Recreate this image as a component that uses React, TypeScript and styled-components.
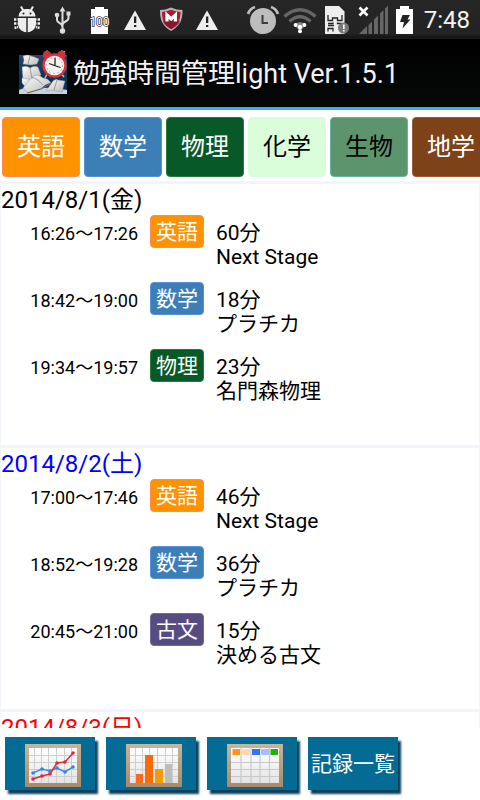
import React from "react";
import styled, { createGlobalStyle } from "styled-components";

const GlobalStyle = createGlobalStyle`
  *, *::before, *::after { box-sizing: border-box; }
  body {
    margin: 0;
    background: #ffffff;
    color: #000000;
    font-family: Roboto, "Noto Sans CJK JP", sans-serif;
  }
  button { font-family: inherit; }
`;

const Screen = styled.div`
  display: flex;
  flex-direction: column;
  height: 100vh;
  overflow: hidden;
`;

const StatusBar = styled.div`
  display: flex;
  flex: none;
  align-items: center;
  justify-content: space-between;
  height: 39px;
  padding: 0 10px 0 9px;
  background: linear-gradient(#262626 0, #232323 34px, #151515 37px, #1c1c1c 39px);
`;

const StatusGroup = styled.div<{ $gap?: number }>`
  display: flex;
  align-items: center;
  gap: ${(p) => p.$gap ?? 0}px;
`;

const StatusIcon = styled.svg<{ $width?: number }>`
  display: block;
  width: ${(p) => p.$width ?? 36}px;
  height: 38px;
`;

const Clock = styled.time`
  padding-left: 6px;
  color: #f4f4f4;
  font-size: 24px;
  line-height: 38px;
`;

const TitleBar = styled.header`
  display: flex;
  flex: none;
  align-items: center;
  gap: 5px;
  height: 71px;
  padding: 0 18px;
  background: linear-gradient(#000000, #060808);
  border-bottom: 3px solid #33b1e4;
`;

const AppIcon = styled.svg`
  flex: none;
  width: 50px;
  height: 48px;
`;

const Title = styled.h1`
  margin: 0;
  padding-top: 2px;
  color: #f3f3f3;
  font-size: 27px;
  font-weight: 400;
  line-height: 36px;
  white-space: nowrap;
`;

const SubjectBar = styled.nav`
  display: flex;
  flex: none;
  gap: 4px;
  padding: 7px 2px 4px;
  overflow-x: auto;
  scrollbar-width: none;
`;

type Tone = { fill: string; edge: string; text: string };

const SubjectButton = styled.button<{ $tone: Tone }>`
  flex: none;
  width: 78px;
  height: 60px;
  padding: 0;
  border: 1px solid ${(p) => p.$tone.edge};
  border-radius: 4px;
  background: ${(p) => p.$tone.fill};
  color: ${(p) => p.$tone.text};
  font-size: 24px;
  line-height: 36px;
`;

const DayList = styled.main`
  flex: 1;
  min-height: 0;
  overflow-y: auto;
  scrollbar-width: none;
`;

const Day = styled.section`
  padding-bottom: 29px;
  border: solid #f0f6fa;
  border-width: 3px 1px 0;
`;

const DayTitle = styled.h2<{ $color: string }>`
  margin: 0;
  height: 31px;
  color: ${(p) => p.$color};
  font-size: 24px;
  font-weight: 400;
  line-height: 33px;
`;

const Entries = styled.ul`
  margin: 0;
  padding: 0;
  list-style: none;
`;

const Entry = styled.li`
  display: grid;
  grid-template-columns: 137px 54px 1fr;
  column-gap: 12px;
  align-items: start;
  height: 67px;
  padding-right: 12px;
`;

const Period = styled.span`
  font-size: 18px;
  line-height: 38px;
  text-align: right;
  white-space: nowrap;
`;

const Badge = styled.span<{ $tone: Tone }>`
  height: 33px;
  border: 1px solid ${(p) => p.$tone.edge};
  border-radius: 4px;
  background: ${(p) => p.$tone.fill};
  color: ${(p) => p.$tone.text};
  font-size: 21px;
  line-height: 33px;
  text-align: center;
`;

const Detail = styled.div`
  padding-top: 6px;
  font-size: 21px;
  line-height: 24px;
`;

const Minutes = styled.div``;
const Material = styled.div``;

const BottomBar = styled.footer`
  display: flex;
  flex: none;
  gap: 11px;
  height: 72px;
  padding: 9px 5px;
  background: #ffffff;
`;

const ToolButton = styled.button`
  display: flex;
  flex: none;
  align-items: center;
  justify-content: center;
  width: 90px;
  height: 53px;
  padding: 0 0 3px;
  border: 0;
  background: #046c94;
  box-shadow: 3px 4px 2px #0b3f5c;
  color: #ffffff;
  font-size: 21px;
  white-space: nowrap;
`;

const BoardSvg = styled.svg`
  display: block;
  width: 56px;
  height: 43px;
  margin: 7px 0 0 6px;
`;

const tones: Record<string, Tone> = {
  英語: { fill: "#ff9200", edge: "#ff8a5c", text: "#ffffff" },
  数学: { fill: "#3c7eb6", edge: "#5c90dc", text: "#ffffff" },
  物理: { fill: "#075a28", edge: "#2a7a3c", text: "#ffffff" },
  化学: { fill: "#dafeda", edge: "#dcfce4", text: "#000000" },
  生物: { fill: "#5b946d", edge: "#68b498", text: "#000000" },
  地学: { fill: "#7e4218", edge: "#9c5c3c", text: "#ffffff" },
  古文: { fill: "#574c80", edge: "#7468a8", text: "#ffffff" },
};

const subjects = ["英語", "数学", "物理", "化学", "生物", "地学", "古文"];

const days = [
  {
    date: "2014/8/1(金)",
    color: "#000000",
    entries: [
      { period: "16:26～17:26", subject: "英語", minutes: 60, material: "Next Stage" },
      { period: "18:42～19:00", subject: "数学", minutes: 18, material: "プラチカ" },
      { period: "19:34～19:57", subject: "物理", minutes: 23, material: "名門森物理" },
    ],
  },
  {
    date: "2014/8/2(土)",
    color: "#0000ff",
    entries: [
      { period: "17:00～17:46", subject: "英語", minutes: 46, material: "Next Stage" },
      { period: "18:52～19:28", subject: "数学", minutes: 36, material: "プラチカ" },
      { period: "20:45～21:00", subject: "古文", minutes: 15, material: "決める古文" },
    ],
  },
  { date: "2014/8/3(日)", color: "#ff0000", entries: [] },
];

const DebugIcon = () => (
  <StatusIcon viewBox="0 0 36 38" aria-hidden="true">
    <g fill="#eeeeee">
      <path d="M9.500 15.500C10 10.500 13 8 18 8s8 2.500 8.500 7.500z" />
      <path d="M9 17h8.300v14.200c-5-.5-8.300-4-8.300-9zM18.700 17H27v5.200c0 5-3.300 8.500-8.300 9z" />
    </g>
    <path d="M12 5.500l2.500 4.500M24 5.500l-2.500 4.500" stroke="#eeeeee" strokeWidth="2" />
    <path d="M5 18.500h3.500M5 22.500h3.500M5.500 27l3.500-1M31 18.500h-3.500M31 22.500h-3.500M30.500 27l-3.500-1" stroke="#eeeeee" strokeWidth="2.400" strokeDasharray="2 .6" />
    <circle cx="14.500" cy="12.500" r="1" fill="#232323" />
    <circle cx="21.500" cy="12.500" r="1" fill="#232323" />
  </StatusIcon>
);

const UsbIcon = () => (
  <StatusIcon viewBox="0 0 36 38" aria-hidden="true">
    <g fill="none" stroke="#dddddd" strokeWidth="2">
      <path d="M17.500 9v20M12 14v5c0 3 5.500 3 5.500 7M23.500 13v4c0 4-6 3-6 7" />
    </g>
    <g fill="#dddddd">
      <path d="M17.500 5.500l3 5h-6z" />
      <circle cx="12" cy="14" r="2.300" />
      <path d="M21.500 10.500h4v4h-4z" />
      <circle cx="17.500" cy="30" r="2.700" />
    </g>
  </StatusIcon>
);

const BatteryLevelIcon = () => (
  <StatusIcon viewBox="0 0 36 38" role="img" aria-label="100">
    <path d="M14 6h9v2h4v25H10V8h4z" fill="#ffffff" />
    <text x="18.500" y="24.500" textAnchor="middle" fontFamily="Roboto, sans-serif" fontSize="12" fill="#ffffff" stroke="#333333" strokeWidth="1.500" paintOrder="stroke">
      100
    </text>
  </StatusIcon>
);

const WarningIcon = () => (
  <StatusIcon viewBox="0 0 36 38" aria-hidden="true">
    <path d="M18 9.500L29 29H7z" fill="#eeeeee" />
    <path d="M17 15.500h2.300v6.500H17zM17 24h2.300v2H17z" fill="#232323" />
  </StatusIcon>
);

const ShieldIcon = () => (
  <StatusIcon viewBox="0 0 36 38" aria-hidden="true">
    <path d="M7 9q5.500 0 11-2.500Q23.500 9 29.500 9c0 10-2 15.500-11.500 21C9 24.500 7 19 7 9z" fill="#b9b5b6" />
    <path d="M9 11q4.500-.3 9-2.300 4.500 2 9.500 2.300c0 8-2 12.500-9.500 17.200C11 23.500 9 19 9 11z" fill="#a51c33" />
    <path d="M18 20l9 0c-1 3.500-4 6-9 8.200-5-3.200-7.500-5-8.200-8.200z" fill="#7e1226" opacity=".7" />
    <path d="M14 20.500v-6.500l4.200 4 4.200-4v6.500" fill="none" stroke="#ffffff" strokeWidth="3.200" />
  </StatusIcon>
);

const AlarmIcon = () => (
  <StatusIcon viewBox="0 0 36 38" aria-hidden="true">
    <circle cx="18" cy="20" r="13" fill="#bdbdbd" />
    <path d="M3 13q2-5.500 7-7M33 13q-2-5.500-7-7" fill="none" stroke="#bdbdbd" strokeWidth="2.800" />
    <path d="M17.500 14v8H23" fill="none" stroke="#3b3b3b" strokeWidth="2" />
  </StatusIcon>
);

const WifiIcon = () => (
  <StatusIcon viewBox="0 0 36 38" aria-hidden="true">
    <g fill="none" stroke="#666666" strokeWidth="3.500">
      <path d="M2.500 15.500q15.500-13.500 31 0" />
      <path d="M7.500 20.500q10.500-9.500 21 0" />
    </g>
    <path d="M12 23.500q6-4.500 12 0l-6 7z" fill="#888888" />
    <g fill="#ffffff">
      <circle cx="13.500" cy="24" r="1.900" />
      <circle cx="22.500" cy="24" r="1.900" />
      <circle cx="18" cy="26" r="2.300" />
      <circle cx="18" cy="30.300" r="2" />
    </g>
  </StatusIcon>
);

const SimIcon = () => (
  <StatusIcon viewBox="0 0 36 38" aria-hidden="true">
    <path d="M6 5h14l5.500 5.500V33H6z" fill="#eeeeee" />
    <path d="M9 14v5.500h4.500V17h5v2.500H23V14M9 22.500h5v-1M23 22.500h-4.500v-1M9 24.500h6M9 30.500v-3h5v3" fill="none" stroke="#232323" strokeWidth="1.300" />
    <circle cx="24.500" cy="27" r="5.500" fill="#777777" />
    <path d="M24 23.500h1.600v4.500H24zM24 29h1.600v1.500H24z" fill="#ffffff" />
  </StatusIcon>
);

const SignalIcon = () => (
  <StatusIcon viewBox="0 0 36 38" aria-hidden="true">
    <path d="M3 33l8-8v8zM12.500 24l3.500-3.500V33h-3.500zM18 18.500l4-4V33h-4zM24 12.500l3.500-3.500v24H24zM29 7.500L32 4.500V33h-3z" fill="#666666" />
    <path d="M3.500 6.500l8 8M11.500 6.500l-8 8" stroke="#ffffff" strokeWidth="2.600" />
  </StatusIcon>
);

const ChargingIcon = () => (
  <StatusIcon $width={24} viewBox="0 0 24 38" aria-hidden="true">
    <path d="M7 5h9v3h4v25H3V8h4z" fill="#ffffff" />
    <path d="M9.500 14H17l-2.500 4.500h3l-8 9 1.500-6.500H7z" fill="#232323" />
  </StatusIcon>
);

const StudyIcon = () => (
  <AppIcon viewBox="0 0 50 48" aria-hidden="true">
    <defs>
      <linearGradient id="night" x1="0" y1="0" x2="0" y2="1">
        <stop offset="0" stopColor="#2b4468" />
        <stop offset=".55" stopColor="#0b3557" />
        <stop offset="1" stopColor="#0c2f5c" />
      </linearGradient>
      <linearGradient id="page" x1="0" y1="0" x2="1" y2="1">
        <stop offset="0" stopColor="#ffffff" />
        <stop offset="1" stopColor="#b8b8b6" />
      </linearGradient>
    </defs>
    <path d="M1 6h48v39H1z" fill="url(#night)" />
    <path d="M1 41q9-5 16-1 14-3 32 1v4H1z" fill="#c3d2e6" />
    <g fill="url(#page)" stroke="#8a8a8c" strokeWidth=".4">
      <path d="M5 7q5-2 8 0 4 1 8 3l-2 5-6 1-8-1 1-4z" />
      <path d="M4 18q5-2 8 1 4-3 8-1l3 8-9 5-9 0z" />
      <path d="M4 29l7 1 3 8-4 3-6-7z" />
      <path d="M35 32q3-3 5-1l7 1-3 11-11-2-5 1z" />
      <path d="M14 28q6-4 11 1 5 0 8 5-6 1-9 5l-13 5-6-5z" />
    </g>
    <path d="M14 28q6 2 11 8M12 7l-2 8M12 19l2 11M39 31l-3 10" fill="none" stroke="#8a8a89" strokeWidth=".8" />
    <path d="M9 44l14-4 9-5" fill="none" stroke="#85694b" strokeWidth="1.300" />
    <path d="M27 29l2-4M46 28l-3-4M27 3l3-1M43 2l4 1" stroke="#b9b9bd" strokeWidth="1.500" />
    <circle cx="29" cy="6" r="4.200" fill="#cf3039" />
    <circle cx="43.500" cy="6" r="4.200" fill="#cf3039" />
    <circle cx="36.500" cy="16.500" r="12.200" fill="#d6323b" />
    <circle cx="36.500" cy="16.500" r="9.800" fill="#f6f2f1" />
    <circle cx="36.500" cy="16.500" r="8" fill="none" stroke="#777777" strokeWidth="1" strokeDasharray="1 3.200" />
    <path d="M31 14.500l5.500 2 6 2M37 9v8" fill="none" stroke="#222222" strokeWidth="1.300" />
  </AppIcon>
);

const Board = ({ children, label }: { children: React.ReactNode; label: string }) => (
  <BoardSvg viewBox="0 0 56 43" role="img" aria-label={label}>
    <defs>
      <linearGradient id="frame" x1="0" y1="0" x2="0" y2="1">
        <stop offset="0" stopColor="#c6b69c" />
        <stop offset="1" stopColor="#ad8867" />
      </linearGradient>
      <linearGradient id="paper" x1="0" y1="0" x2="0" y2="1">
        <stop offset="0" stopColor="#ffffff" />
        <stop offset="1" stopColor="#e4e4e4" />
      </linearGradient>
    </defs>
    <path d="M0 0h56v43H0z" fill="url(#frame)" />
    <path d="M4 4h48v35H4z" fill="url(#paper)" />
    {children}
  </BoardSvg>
);

const ChartGrid = () => (
  <path
    d="M9.500 4v35M16.500 4v35M23.500 4v35M31.500 4v35M39.500 4v35M46.500 4v35M4 11.500h48M4 18.500h48M4 25.500h48M4 32.500h48"
    stroke="#cfcfcf"
    strokeWidth="1"
  />
);

const LineChart = () => (
  <Board label="折れ線グラフ">
    <ChartGrid />
    <g fill="none" strokeWidth="1.500">
      <path d="M8 29l9-4 8 2 7-3 8 4 8-5" stroke="#3c8de8" />
      <path d="M8 35l9-3 8-2 7-11 8-1 8-9" stroke="#e02d40" />
    </g>
    <g fill="#2f86e8">
      {[[8, 29], [17, 25], [25, 27], [32, 24], [40, 28], [48, 23]].map(([x, y]) => (
        <circle key={x} cx={x} cy={y} r="1.800" />
      ))}
    </g>
    <g fill="#e0283c">
      {[[8, 35], [17, 32], [25, 30], [32, 19], [40, 18], [48, 9]].map(([x, y]) => (
        <circle key={x} cx={x} cy={y} r="1.800" />
      ))}
    </g>
  </Board>
);

const BarChart = () => (
  <Board label="棒グラフ">
    <ChartGrid />
    <path d="M10 30h7v9h-7z" fill="#fb6a1c" />
    <path d="M19 11h8v28h-8z" fill="#f96b06" />
    <path d="M29 25h8v14h-8z" fill="#f59a08" />
    <path d="M39 20h7v19h-7z" fill="#bdbdbd" />
  </Board>
);

const TableChart = () => (
  <Board label="週間表">
    <path d="M14 4v35M24 4v35M33 4v35M42.500 4v35M4 18.500h48M4 25.500h48M4 32.500h48" stroke="#c9c9c9" strokeWidth="1.200" />
    <path d="M5.500 5h7.500v6H5.500z" fill="#ff941f" />
    <path d="M15 5h8v6h-8z" fill="#fbd8b0" />
    <path d="M25 5h8v6h-8z" fill="#3374f5" />
    <path d="M34 5h8v6h-8z" fill="#a4bffa" />
    <path d="M43.500 5H51v6h-7.500z" fill="#24b00e" />
  </Board>
);

export default function App() {
  return (
    <Screen>
      <GlobalStyle />
      <StatusBar>
        <StatusGroup>
          <DebugIcon />
          <UsbIcon />
          <BatteryLevelIcon />
          <WarningIcon />
          <ShieldIcon />
          <WarningIcon />
        </StatusGroup>
        <StatusGroup $gap={1}>
          <AlarmIcon />
          <WifiIcon />
          <SimIcon />
          <SignalIcon />
          <ChargingIcon />
          <Clock>7:48</Clock>
        </StatusGroup>
      </StatusBar>
      <TitleBar>
        <StudyIcon />
        <Title>勉強時間管理light Ver.1.5.1</Title>
      </TitleBar>
      <SubjectBar>
        {subjects.map((name) => (
          <SubjectButton key={name} type="button" $tone={tones[name]}>
            {name}
          </SubjectButton>
        ))}
      </SubjectBar>
      <DayList>
        {days.map((day) => (
          <Day key={day.date}>
            <DayTitle $color={day.color}>{day.date}</DayTitle>
            <Entries>
              {day.entries.map((entry) => (
                <Entry key={entry.period}>
                  <Period>{entry.period}</Period>
                  <Badge $tone={tones[entry.subject]}>{entry.subject}</Badge>
                  <Detail>
                    <Minutes>{entry.minutes}分</Minutes>
                    <Material>{entry.material}</Material>
                  </Detail>
                </Entry>
              ))}
            </Entries>
          </Day>
        ))}
      </DayList>
      <BottomBar>
        <ToolButton type="button">
          <LineChart />
        </ToolButton>
        <ToolButton type="button">
          <BarChart />
        </ToolButton>
        <ToolButton type="button">
          <TableChart />
        </ToolButton>
        <ToolButton type="button">記録一覧</ToolButton>
      </BottomBar>
    </Screen>
  );
}
